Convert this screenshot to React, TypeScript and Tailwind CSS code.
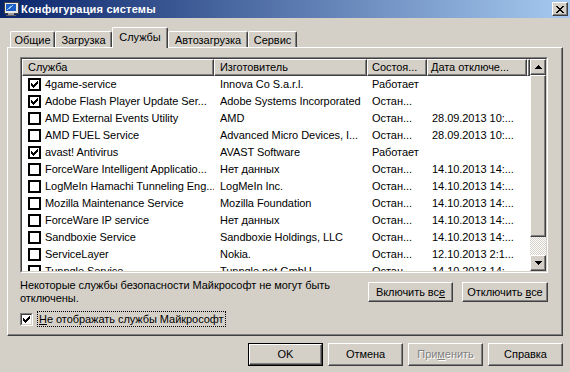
import React from "react";

//#region styles
const raised =
  "border border-t-white border-l-white border-r-[#404040] border-b-[#404040] shadow-[inset_-1px_-1px_0_#808080]";
//#endregion

type Row = [boolean, string, string, string, string];

const rows: Row[] = [
  [true, "4game-service", "Innova Co S.a.r.l.", "Работает", ""],
  [true, "Adobe Flash Player Update Ser...", "Adobe Systems Incorporated", "Остан...", ""],
  [false, "AMD External Events Utility", "AMD", "Остан...", "28.09.2013 10:..."],
  [false, "AMD FUEL Service", "Advanced Micro Devices, I...", "Остан...", "28.09.2013 10:..."],
  [true, "avast! Antivirus", "AVAST Software", "Работает", ""],
  [false, "ForceWare Intelligent Applicatio...", "Нет данных", "Остан...", "14.10.2013 14:..."],
  [false, "LogMeIn Hamachi Tunneling Eng...", "LogMeIn Inc.", "Остан...", "14.10.2013 14:..."],
  [false, "Mozilla Maintenance Service", "Mozilla Foundation", "Остан...", "14.10.2013 14:..."],
  [false, "ForceWare IP service", "Нет данных", "Остан...", "14.10.2013 14:..."],
  [false, "Sandboxie Service", "Sandboxie Holdings, LLC", "Остан...", "14.10.2013 14:..."],
  [false, "ServiceLayer", "Nokia.", "Остан...", "12.10.2013 2:1..."],
  [false, "Tunngle Service", "Tunngle.net GmbH", "Остан...", "14.10.2013 14:..."],
];

function Check() {
  return (
    <svg width="7" height="7" viewBox="0 0 7 7" shapeRendering="crispEdges">
      <path
        fill="#000"
        d="M0 2h1v3H0z M1 3h1v3H1z M2 4h1v3H2z M3 3h1v3H3z M4 2h1v3H4z M5 1h1v3H5z M6 0h1v3H6z"
      />
    </svg>
  );
}

function Arrow({ down }: { down?: boolean }) {
  return (
    <svg width="7" height="4" viewBox="0 0 7 4" shapeRendering="crispEdges">
      <path
        fill="#000"
        d={
          down
            ? "M0 0h7v1H0z M1 1h5v1H1z M2 2h3v1H2z M3 3h1v1H3z"
            : "M3 0h1v1H3z M2 1h3v1H2z M1 2h5v1H1z M0 3h7v1H0z"
        }
      />
    </svg>
  );
}

function MonitorIcon() {
  return (
    <svg width="16" height="16" viewBox="0 0 16 16" shapeRendering="crispEdges">
      <rect x="1" y="1" width="14" height="11" fill="#e8e8e8" stroke="#404040" strokeWidth="1" />
      <rect x="3" y="3" width="10" height="7" fill="#1c5fc8" />
      <path d="M4 9l6-5" stroke="#9fd0ff" strokeWidth="1" />
      <rect x="5" y="12" width="6" height="2" fill="#a0a0a0" />
      <rect x="3" y="14" width="10" height="1" fill="#606060" />
    </svg>
  );
}

function CloseGlyph() {
  return (
    <svg width="8" height="7" viewBox="0 0 8 7" shapeRendering="crispEdges">
      <path
        fill="#000"
        d="M0 0h2v1H0z M6 0h2v1H6z M1 1h2v1H1z M5 1h2v1H5z M2 2h4v1H2z M3 3h2v1H3z M2 4h4v1H2z M1 5h2v1H1z M5 5h2v1H5z M0 6h2v1H0z M6 6h2v1H6z"
      />
    </svg>
  );
}

function ListBox({ on }: { on: boolean }) {
  return (
    <div className="w-[13px] h-[13px] shrink-0 border-2 border-black bg-white flex items-center justify-center">
      {on && <Check />}
    </div>
  );
}

const tabs = [
  { label: "Общие", w: "w-[45px]" },
  { label: "Загрузка", w: "w-[57px]" },
  { label: "Службы", w: "w-[56px]", active: true },
  { label: "Автозагрузка", w: "w-[80px]" },
  { label: "Сервис", w: "w-[49px]" },
];

export default function App() {
  return (
    <div className="w-[570px] h-[372px] bg-[#d4d0c8] overflow-hidden font-['Liberation_Sans',Arial,sans-serif] text-[11px] leading-[13px] text-black tracking-[-0.05px] select-none">
      {/* title bar */}
      <div className="h-[18px] flex items-center bg-linear-to-r/srgb from-[#0a246a] to-[#a6caf0] pl-[3px] pr-[2px]">
        <MonitorIcon />
        <span className="ml-[2px] font-bold text-white tracking-[0.2px]">Конфигурация системы</span>
        <div className={`ml-auto w-[16px] h-[14px] bg-[#d4d0c8] flex items-center justify-center ${raised}`}>
          <CloseGlyph />
        </div>
      </div>

      <div className="px-[7px] pt-[9px]">
        {/* tabs */}
        <div className="h-[20px] flex items-end pl-[3px]">
          {tabs.map((t) =>
            t.active ? (
              <div
                key={t.label}
                className={`${t.w} h-[21px] -mb-[1px] relative z-10 bg-[#d4d0c8] rounded-t-[2px] border-t border-l border-t-white border-l-white border-r border-r-[#404040] shadow-[inset_-1px_0_0_#808080] flex justify-center pt-[3px]`}
              >
                {t.label}
              </div>
            ) : (
              <div
                key={t.label}
                className={`${t.w} h-[16px] rounded-t-[2px] border-t border-l border-t-white border-l-white border-r border-r-[#404040] shadow-[inset_-1px_0_0_#808080] flex justify-center pt-[2px]`}
              >
                {t.label}
              </div>
            )
          )}
        </div>

        {/* panel */}
        <div className="h-[289px] border border-t-white border-l-white border-r-[#404040] border-b-[#404040] shadow-[inset_-1px_-1px_0_#808080] pt-[9px] pl-[12px]">
          {/* list view */}
          <div className="w-[528px] h-[216px] border border-t-[#808080] border-l-[#808080] border-r-white border-b-white">
            <div className="w-full h-full border border-t-[#404040] border-l-[#404040] border-r-[#d4d0c8] border-b-[#d4d0c8] bg-white flex">
              <div className="flex-1 flex flex-col overflow-hidden">
                <div className="h-[17px] flex shrink-0 bg-[#d4d0c8]">
                  <div className={`w-[192px] pl-[5px] flex items-center ${raised}`}>Служба</div>
                  <div className={`w-[153px] pl-[5px] flex items-center ${raised}`}>Изготовитель</div>
                  <div className={`w-[60px] pl-[4px] flex items-center ${raised}`}>Состоя...</div>
                  <div className={`w-[100px] pl-[3px] flex items-center ${raised}`}>Дата отключе...</div>
                  <div className={`flex-1 ${raised}`} />
                </div>
                <div className="flex-1 overflow-hidden">
                  {rows.map(([on, name, maker, state, date]) => (
                    <div key={name} className="h-[17px] flex items-center whitespace-nowrap">
                      <div className="w-[192px] pl-[6px] flex items-center gap-[4px] overflow-hidden">
                        <ListBox on={on} />
                        <span>{name}</span>
                      </div>
                      <div className="w-[153px] pl-[6px] overflow-hidden">{maker}</div>
                      <div className="w-[60px] pl-[5px] overflow-hidden">{state}</div>
                      <div className="w-[100px] pl-[5px] overflow-hidden">{date}</div>
                    </div>
                  ))}
                </div>
              </div>
              {/* scrollbar */}
              <div className="w-[16px] flex flex-col shrink-0">
                <div className={`h-[16px] bg-[#d4d0c8] flex items-center justify-center ${raised}`}>
                  <Arrow />
                </div>
                <div className={`h-[162px] bg-[#d4d0c8] ${raised}`} />
                <div className="flex-1 bg-[repeating-conic-gradient(#d4d0c8_0%_25%,#ffffff_0%_50%)] bg-size-[2px_2px]" />
                <div className={`h-[16px] bg-[#d4d0c8] flex items-center justify-center ${raised}`}>
                  <Arrow down />
                </div>
              </div>
            </div>
          </div>

          {/* notice + buttons */}
          <div className="w-[528px] mt-[6px] flex items-start">
            <p className="flex-1">
              Некоторые службы безопасности Майкрософт не могут быть
              <br />
              отключены.
            </p>
            <div className="flex gap-[9px] mt-[3px]">
              <button className={`w-[85px] h-[20px] bg-[#d4d0c8] ${raised}`}>
                Включить вс<u>е</u>
              </button>
              <button className={`w-[86px] h-[20px] bg-[#d4d0c8] ${raised}`}>
                Отключить <u>в</u>се
              </button>
            </div>
          </div>

          {/* hide ms services */}
          <div className="mt-[6px] h-[16px] flex items-center">
            <div className="w-[13px] h-[13px] border border-t-[#808080] border-l-[#808080] border-r-white border-b-white">
              <div className="w-full h-full border border-t-[#404040] border-l-[#404040] border-r-[#d4d0c8] border-b-[#d4d0c8] bg-white flex items-center justify-center">
                <Check />
              </div>
            </div>
            <span className="ml-[4px] h-[16px] px-[1px] flex items-center border border-dotted border-black">
              <u>Н</u>е отображать службы Майкрософт
            </span>
          </div>
        </div>
      </div>

      {/* dialog buttons */}
      <div className="mt-[7px] pr-[7px] flex justify-end gap-[5px]">
        <div className="w-[75px] h-[23px] border border-black">
          <button className={`w-full h-full bg-[#d4d0c8] ${raised}`}>OK</button>
        </div>
        <button className={`w-[75px] h-[23px] bg-[#d4d0c8] ${raised}`}>Отмена</button>
        <button className={`w-[75px] h-[23px] bg-[#d4d0c8] text-[#808080] [text-shadow:1px_1px_0_#fff] ${raised}`}>
          При<u>м</u>енить
        </button>
        <button className={`w-[75px] h-[23px] bg-[#d4d0c8] ${raised}`}>Справка</button>
      </div>
    </div>
  );
}
